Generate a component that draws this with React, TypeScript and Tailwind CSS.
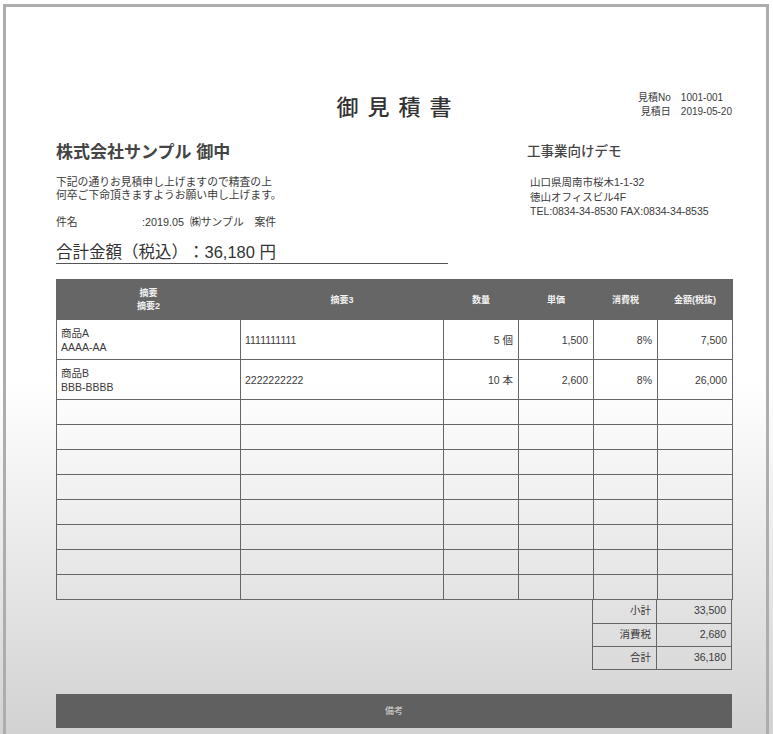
const rows = [
  { a: "商品A", b: "AAAA-AA", c: "1111111111", qty: "5 個", price: "1,500", tax: "8%", amount: "7,500" },
  { a: "商品B", b: "BBB-BBBB", c: "2222222222", qty: "10 本", price: "2,600", tax: "8%", amount: "26,000" },
];

const summary = [
  { label: "小計", value: "33,500" },
  { label: "消費税", value: "2,680" },
  { label: "合計", value: "36,180" },
];

const EMPTY_ROWS = 8;

export default function App() {
  return (
    <div className="w-[773px] h-[734px] overflow-hidden bg-[linear-gradient(to_bottom,#ffffff_0%,#ffffff_52%,#d2d2d2_100%)] pl-[3px] pt-[4px] font-['Liberation_Sans','Noto_Sans_CJK_JP',sans-serif] text-[#3a3a3a] [text-spacing-trim:space-all]">
      <div className="w-[766px] h-[740px] border-[3px] border-b-0 border-[#adadad] pl-[50px] pr-[34px] pt-[83px]">
        {/* top: title + meta */}
        <div className="grid grid-cols-3 items-start h-[28px]">
          <div />
          <h1 className="text-center text-[22px] leading-[26px] mt-[2px] tracking-[9px] pl-[9px] font-medium text-[#333] font-['Noto_Sans_CJK_JP',sans-serif]">
            御見積書
          </h1>
          <div className="justify-self-end grid grid-cols-[auto_auto] gap-x-[10px] text-[10px] leading-[14px] pt-[1px]">
            <span className="text-right">見積No</span>
            <span>1001-001</span>
            <span className="text-right">見積日</span>
            <span>2019-05-20</span>
          </div>
        </div>

        {/* client / company */}
        <div className="flex mt-[25px]">
          <div className="w-[392px]">
            <h2 className="text-[17px] leading-[20px] font-bold text-[#444]">株式会社サンプル 御中</h2>
            <p className="mt-[13px] text-[10.8px] leading-[13px]">
              下記の通りお見積申し上げますので精査の上
              <br />
              何卒ご下命頂きますようお願い申し上げます。
            </p>
            <div className="flex mt-[14px] text-[10.8px] leading-[13px]">
              <span className="w-[86px]">件名</span>
              <span>:2019.05&nbsp;&nbsp;㈱サンプル　案件</span>
            </div>
            <div className="mt-[13px] text-[16.5px] leading-[20px] border-b border-[#555] pb-[1px] text-[#333]">
              合計金額（税込）：36,180 円
            </div>
          </div>
          <div className="ml-[79px]">
            <h3 className="text-[13.5px] leading-[18px] font-medium text-[#444]">工事業向けデモ</h3>
            <div className="mt-[14px] ml-[3px] text-[10.5px] leading-[14.5px]">
              <p>山口県周南市桜木1-1-32</p>
              <p>徳山オフィスビル4F</p>
              <p>TEL:0834-34-8530 FAX:0834-34-8535</p>
            </div>
          </div>
        </div>

        {/* items table */}
        <table className="mt-[15px] w-[676px] table-fixed border-collapse text-[10.5px] leading-[14px]">
          <colgroup>
            <col className="w-[184px]" />
            <col className="w-[203px]" />
            <col className="w-[75px]" />
            <col className="w-[75px]" />
            <col className="w-[64px]" />
            <col className="w-[75px]" />
          </colgroup>
          <thead>
            <tr className="h-[40px] bg-[#666] text-[#f2f2f2] text-[9px] font-bold">
              <th className="border border-[#666] leading-[13px]">
                摘要
                <br />
                摘要2
              </th>
              <th className="border border-[#666]">摘要3</th>
              <th className="border border-[#666]">数量</th>
              <th className="border border-[#666]">単価</th>
              <th className="border border-[#666]">消費税</th>
              <th className="border border-[#666]">金額(税抜)</th>
            </tr>
          </thead>
          <tbody>
            {rows.map((r) => (
              <tr key={r.a} className="h-[40px]">
                <td className="border border-[#666] px-[4px]">
                  {r.a}
                  <br />
                  {r.b}
                </td>
                <td className="border border-[#666] px-[4px]">{r.c}</td>
                <td className="border border-[#666] px-[5px] text-right">{r.qty}</td>
                <td className="border border-[#666] px-[5px] text-right">{r.price}</td>
                <td className="border border-[#666] px-[5px] text-right">{r.tax}</td>
                <td className="border border-[#666] px-[5px] text-right">{r.amount}</td>
              </tr>
            ))}
            {Array.from({ length: EMPTY_ROWS }).map((_, i) => (
              <tr key={i} className="h-[25px]">
                <td className="border border-[#666]" />
                <td className="border border-[#666]" />
                <td className="border border-[#666]" />
                <td className="border border-[#666]" />
                <td className="border border-[#666]" />
                <td className="border border-[#666]" />
              </tr>
            ))}
          </tbody>
        </table>

        {/* totals */}
        <table className="ml-auto w-[139px] table-fixed border-collapse text-[10.5px]">
          <colgroup>
            <col className="w-[64px]" />
            <col className="w-[75px]" />
          </colgroup>
          <tbody>
            {summary.map((s, i) => (
              <tr key={s.label} className="h-[23px]">
                <td className={`border border-[#666] px-[5px] text-right ${i === 0 ? "border-t-0" : ""}`}>{s.label}</td>
                <td className={`border border-[#666] px-[5px] text-right ${i === 0 ? "border-t-0" : ""}`}>{s.value}</td>
              </tr>
            ))}
          </tbody>
        </table>

        {/* remarks */}
        <div className="mt-[24px] h-[34px] bg-[#606060] text-center text-[9px] leading-[34px] text-[#d8d8d8]">備考</div>
      </div>
    </div>
  );
}
